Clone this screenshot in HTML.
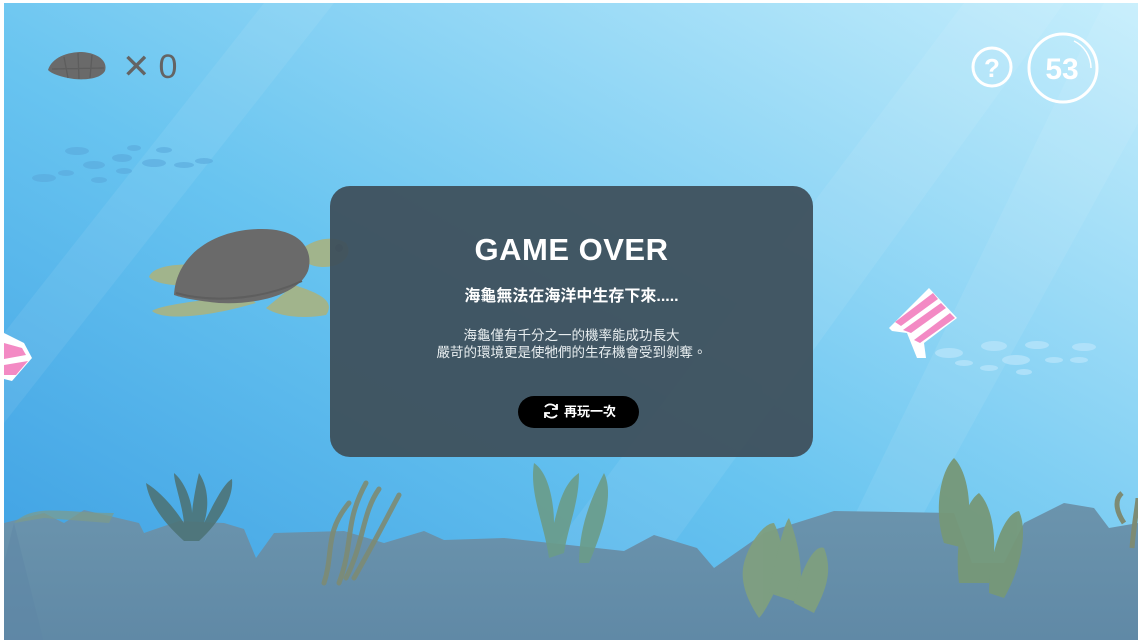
<!DOCTYPE html>
<html><head><meta charset="utf-8"><style>
html,body{margin:0;padding:0;width:1142px;height:644px;overflow:hidden;background:#fff}
.scene{position:absolute;left:4px;top:3px;width:1134px;height:637px;overflow:hidden}
svg{position:absolute;left:0;top:0}
.panel{position:absolute;left:330px;top:186px;width:483px;height:271px;border-radius:20px;background:rgba(62,80,92,0.95);color:#fff;text-align:center;font-family:"Liberation Sans","Noto Sans CJK TC",sans-serif}
.t1{position:absolute;left:0;right:0;top:46px;font-size:31px;font-weight:bold;letter-spacing:0.5px}
.t2{position:absolute;left:0;right:0;top:96px;font-size:16px;font-weight:bold}
.t3{position:absolute;left:0;right:0;top:141px;font-size:13.5px;line-height:17px;color:#e8eef0}
.btn{position:absolute;left:188px;top:210px;width:121px;height:32px;border-radius:16px;background:#000;font-size:13px;font-weight:bold;line-height:32px}
.btn svg{position:static;vertical-align:middle;margin-right:3px;margin-top:-3px}
.hud{position:absolute;font-family:"Liberation Sans",sans-serif}
</style></head><body>
<div class="scene">
<svg width="1134" height="637" viewBox="0 0 1134 637">
<defs>
<linearGradient id="bg" x1="0" y1="1" x2="1" y2="0">
<stop offset="0" stop-color="#3a9de2"/><stop offset="0.45" stop-color="#68c4f0"/><stop offset="1" stop-color="#c6eefc"/>
</linearGradient>
<linearGradient id="rk" x1="0" y1="0" x2="0" y2="1"><stop offset="0" stop-color="#6b94ad"/><stop offset="1" stop-color="#6089a6"/></linearGradient>
</defs>
<rect width="1134" height="637" fill="url(#bg)"/>
<g fill="#fff" opacity="0.07">
<polygon points="260,0 330,0 0,420 0,330"/>
<polygon points="960,0 1060,0 600,637 480,637"/>
<polygon points="1100,0 1134,0 1134,120 850,637 790,637"/>
</g>
<g fill="#5aa9dc" opacity="0.6">
<ellipse cx="73" cy="148" rx="12" ry="4"/><ellipse cx="118" cy="155" rx="10" ry="4"/><ellipse cx="150" cy="160" rx="12" ry="4"/><ellipse cx="90" cy="162" rx="11" ry="4"/><ellipse cx="40" cy="175" rx="12" ry="4"/><ellipse cx="62" cy="170" rx="8" ry="3"/><ellipse cx="120" cy="168" rx="8" ry="3"/><ellipse cx="160" cy="147" rx="8" ry="3"/><ellipse cx="180" cy="162" rx="10" ry="3"/><ellipse cx="200" cy="158" rx="9" ry="3"/><ellipse cx="95" cy="177" rx="8" ry="3"/><ellipse cx="130" cy="145" rx="7" ry="3"/>
</g>
<g fill="#b6e4fb" opacity="0.8">
<ellipse cx="945" cy="350" rx="14" ry="5"/><ellipse cx="990" cy="343" rx="13" ry="5"/><ellipse cx="1033" cy="342" rx="12" ry="4"/><ellipse cx="1080" cy="344" rx="12" ry="4"/><ellipse cx="1012" cy="357" rx="14" ry="5"/><ellipse cx="960" cy="360" rx="9" ry="3"/><ellipse cx="1050" cy="357" rx="9" ry="3"/><ellipse cx="1075" cy="357" rx="9" ry="3"/><ellipse cx="985" cy="365" rx="9" ry="3"/><ellipse cx="1020" cy="369" rx="8" ry="3"/>
</g>
<g transform="translate(885,285)">
<path d="M0,40 L40,0 L68,30 L35,55 L37,70 L28,70 L18,45 L3,43Z" fill="#fff"/>
<path d="M6,34 L44,5 L49,11 L12,38Z M14,42 L52,15 L57,20 L22,45Z M25,52 L61,25 L66,30 L31,55Z" fill="#f38ac4"/>
</g>
<g><path d="M0,330 L20,340 L28,355 L8,378 L0,376Z" fill="#fff"/><path d="M0,340 L18,345 L22,352 L0,356Z M0,362 L24,358 L12,372 L0,372Z" fill="#f38ac4"/></g>
<g>
<path d="M195,262 C170,260 148,264 145,274 C152,282 178,284 200,282Z" fill="#a1b48c"/>
<path d="M240,290 C220,296 160,300 148,308 C160,318 205,314 252,300Z" fill="#a1b48c"/>
<path d="M290,282 C315,290 332,298 322,312 C300,316 275,314 262,305Z" fill="#a1b48c"/>
<path d="M295,248 C310,235 330,232 342,240 C350,252 338,264 320,264 C305,264 298,258 295,248Z" fill="#a1b48c"/>
<ellipse cx="335" cy="245" rx="4" ry="4" fill="#6e7a6a"/>
<path d="M170,292 C172,252 210,226 258,226 C298,226 310,248 304,268 C294,292 252,302 215,300 C195,298 178,295 170,292Z" fill="#6a6a6a"/>
<path d="M172,290 C200,298 250,300 298,278" stroke="#5e5e5e" stroke-width="2" fill="none"/>
</g>
<path d="M0,520 L40,510 L60,520 L80,507 L135,520 L140,530 L175,518 L220,520 L240,526 L252,555 L270,530 L340,528 L380,540 L420,528 L440,537 L500,535 L620,548 L650,532 L693,545 L710,565 L760,530 L830,508 L950,510 L968,560 L1000,560 L1020,520 L1060,500 L1090,505 L1105,525 L1134,520 L1134,637 L0,637Z" fill="url(#rk)"/>
<path d="M10,520 C30,500 60,510 110,510 L105,520 L40,515Z" fill="#7d9b8a" opacity="0.7"/>
<path d="M0,560 L10,520 L40,640 L0,640Z" fill="#5e86a6" opacity="0.5"/>
<g fill="#4c7377" opacity="0.9">
<path d="M180,538 C160,520 145,500 142,480 C158,490 170,505 180,520 C178,500 170,480 170,470 C182,480 188,500 188,510 C190,490 195,470 195,470 C205,485 205,505 200,520 C210,500 220,480 228,476 C230,495 215,520 195,538Z"/>
</g>
<g stroke="#7d8b74" stroke-width="5" fill="none" opacity="0.9" stroke-linecap="round">
<path d="M320,580 C330,550 320,530 345,500"/><path d="M335,580 C350,540 340,520 362,480"/><path d="M350,575 C370,540 380,520 395,492"/><path d="M342,575 C360,540 358,510 375,486"/>
</g>
<g fill="#6b9c89" opacity="0.9">
<path d="M545,555 C540,520 525,490 530,460 C545,470 550,500 550,520 C555,500 560,480 575,470 C575,500 565,520 560,550Z"/>
<path d="M575,560 C575,520 590,490 600,470 C610,490 600,525 585,560Z"/>
</g>
<g fill="#7f9f7f" opacity="0.95">
<path d="M740,560 C745,540 760,520 770,520 C780,540 780,560 770,590 C765,600 760,610 755,615 C745,600 735,580 740,560Z"/>
<path d="M765,590 C770,560 780,520 785,515 C795,540 800,570 795,600Z"/>
<path d="M790,600 C795,570 810,540 820,545 C830,570 820,590 810,610Z"/>
</g>
<g fill="#769878" opacity="0.95">
<path d="M940,540 C930,510 935,470 950,455 C965,470 970,510 960,545Z"/>
<path d="M955,580 C950,540 960,500 975,490 C990,505 995,545 985,580Z"/>
<path d="M985,590 C985,550 1000,510 1015,508 C1025,530 1015,570 1000,595Z"/>
</g>
<path d="M1120,520 C1110,505 1112,495 1118,490 M1128,545 C1130,520 1134,500 1134,495" stroke="#7d8b74" stroke-width="5" fill="none"/>
</svg>
<svg width="70" height="40" style="left:42px;top:46px" viewBox="0 0 70 40"><path d="M2,21 C6,8 22,3 36,3 C52,4 62,12 59,22 C54,30 40,31 28,30 C15,28 6,25 2,21Z" fill="#6a6a6a"/><path d="M18,8 L22,29 M32,4 L33,30 M46,6 L44,29 M6,20 L58,19" stroke="#5d5d5d" stroke-width="1.3" fill="none"/></svg>
<div class="hud" style="left:118px;top:44px;font-size:34px;color:#646464">✕<span style="margin-left:8px">0</span></div>
<svg width="44" height="44" style="left:966px;top:42px" viewBox="0 0 44 44"><circle cx="22" cy="22" r="19" fill="none" stroke="#fff" stroke-width="3"/><text x="22" y="32" font-family="Liberation Sans" font-weight="bold" font-size="26" fill="#fff" text-anchor="middle">?</text></svg>
<svg width="74" height="74" style="left:1022px;top:28px" viewBox="0 0 74 74"><circle cx="37" cy="37" r="34" fill="none" stroke="#fff" stroke-width="3"/><path d="M48,10 A30,30 0 0 1 65,37" fill="none" stroke="#fff" stroke-width="1.5"/><text x="36" y="48" font-family="Liberation Sans" font-weight="bold" font-size="30" fill="#fff" text-anchor="middle">53</text></svg>
</div>
<div class="panel">
<div class="t1">GAME OVER</div>
<div class="t2">海龜無法在海洋中生存下來.....</div>
<div class="t3">海龜僅有千分之一的機率能成功長大<br>嚴苛的環境更是使牠們的生存機會受到剝奪。</div>
<div class="btn"><svg width="20" height="20" viewBox="0 0 20 20"><path d="M16,8 A7,7 0 0 0 4,6 M4,12 A7,7 0 0 0 16,14" fill="none" stroke="#fff" stroke-width="1.8"/><path d="M16,3 L16,8 L11,8 M4,17 L4,12 L9,12" fill="none" stroke="#fff" stroke-width="1.8"/></svg>再玩一次</div>
</div>
</body></html>
